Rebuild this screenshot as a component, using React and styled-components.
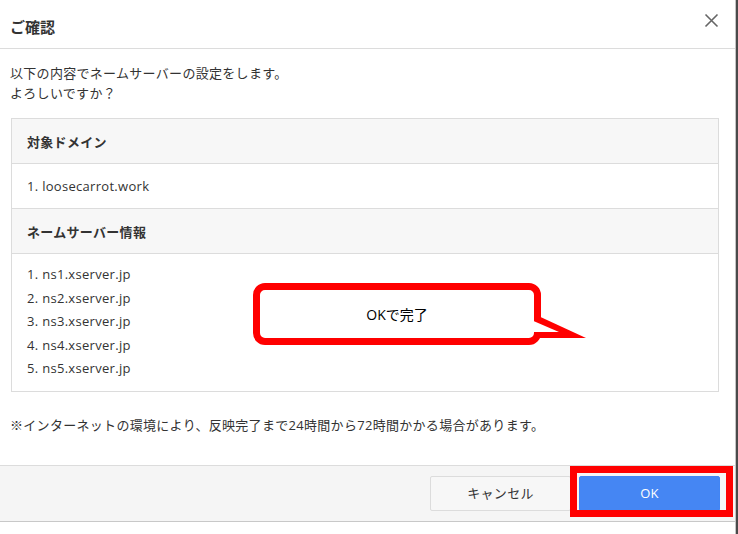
import styled, { createGlobalStyle } from 'styled-components';

const GlobalStyle = createGlobalStyle`
  html, body {
    margin: 0;
    padding: 0;
    background: #4a4a4a;
  }
  body {
    font-family: "Open Sans", "Noto Sans CJK JP", sans-serif;
    color: #333;
  }
`;

const nameservers = ['ns1.xserver.jp', 'ns2.xserver.jp', 'ns3.xserver.jp', 'ns4.xserver.jp', 'ns5.xserver.jp'];

export default function App() {
  return (
    <>
      <GlobalStyle />
      <Page>
        <Dialog>
          <Header>
            <Title>ご確認</Title>
            <CloseButton aria-label="close">
              <svg width={15} height={15} viewBox="0 0 15 15" aria-hidden="true">
                <path d="M1.5 1.5L13.5 13.5M13.5 1.5L1.5 13.5" stroke="#666" strokeWidth="1.6" fill="none" />
              </svg>
            </CloseButton>
          </Header>

          <Body>
            <Lead>
              以下の内容でネームサーバーの設定をします。
              <br />
              よろしいですか？
            </Lead>

            <InfoTable>
              <HeadRow>対象ドメイン</HeadRow>
              <ValueRow>1. loosecarrot.work</ValueRow>
              <HeadRow>ネームサーバー情報</HeadRow>
              <ListRow>
                {nameservers.map((ns, i) => (
                  <li key={ns}>
                    {i + 1}. {ns}
                  </li>
                ))}
              </ListRow>

              <Bubble>
                OKで完了
                <Tail width={60} height={32} viewBox="0 0 60 32" aria-hidden="true">
                  <polygon points="4,4 56,28 4,28" fill="#ff0000" />
                  <polygon points="0,9.5 29,22 0,22" fill="#fff" />
                </Tail>
              </Bubble>
            </InfoTable>

            <Note>※インターネットの環境により、反映完了まで24時間から72時間かかる場合があります。</Note>
          </Body>

          <Footer>
            <Button>キャンセル</Button>
            <Button primary>OK</Button>
            <Highlight />
          </Footer>
        </Dialog>
      </Page>
    </>
  );
}

const Page = styled.div`
  width: 738px;
  height: 534px;
  overflow: hidden;
`;

const Dialog = styled.div`
  width: 735px;
  height: 534px;
  background: #fff;
  border-right: 1px solid #c4c4c4;
  display: flex;
  flex-direction: column;
`;

const Header = styled.div`
  height: 49px;
  box-sizing: border-box;
  padding: 17px 16px 0 10px;
  border-bottom: 1px solid #dcdcdc;
  display: flex;
  justify-content: space-between;
  align-items: flex-start;
`;

const Title = styled.h2`
  margin: 0;
  font-size: 15px;
  line-height: 20px;
  font-weight: bold;
  color: #333;
`;

const CloseButton = styled.button`
  margin-top: -4px;
  padding: 0;
  border: 0;
  background: none;
  width: 15px;
  height: 15px;
  cursor: pointer;
`;

const Body = styled.div`
  flex: 1;
  padding: 14px 16px 0 11px;
  letter-spacing: 0.3px;
`;

const Lead = styled.p`
  margin: 0 0 0 -1px;
  font-size: 13px;
  line-height: 20px;
`;

const InfoTable = styled.div`
  position: relative;
  margin-top: 15px;
  border: 1px solid #dcdcdc;
  border-bottom-width: 0;
  font-size: 13px;
`;

const Row = styled.div`
  height: 45px;
  box-sizing: border-box;
  padding: 0 15px;
  display: flex;
  align-items: center;
  border-bottom: 1px solid #dcdcdc;
`;

const HeadRow = styled(Row)`
  background: #f7f7f7;
  font-weight: bold;
`;

const ValueRow = styled(Row)`
  background: #fff;
`;

const ListRow = styled.ol`
  list-style: none;
  margin: 0;
  padding: 9px 15px 10px;
  border-bottom: 1px solid #dcdcdc;
  line-height: 23.5px;
`;

const Bubble = styled.div`
  position: absolute;
  left: 241px;
  top: 164px;
  width: 288px;
  height: 62px;
  box-sizing: border-box;
  border: 7px solid #ff0000;
  border-radius: 12px;
  background: #fff;
  display: flex;
  align-items: center;
  justify-content: center;
  font-size: 14px;
  letter-spacing: 0;
  color: #000;
`;

const Tail = styled.svg`
  position: absolute;
  left: 270px;
  top: 20px;
  overflow: visible;
`;

const Note = styled.p`
  margin: 23px 0 0 -1px;
  font-size: 13px;
  line-height: 20px;
`;

const Footer = styled.div`
  position: relative;
  height: 57px;
  box-sizing: border-box;
  margin-bottom: 12px;
  padding: 10px 15px 0 0;
  background: #f5f5f5;
  border-top: 1px solid #dcdcdc;
  border-bottom: 1px solid #c8c8c8;
  display: flex;
  justify-content: flex-end;
  align-items: flex-start;
  gap: 8px;
`;

const Button = styled.button`
  width: 141px;
  height: 35px;
  padding: 0 0 2px;
  border-radius: 2px;
  font-family: inherit;
  font-size: 13px;
  letter-spacing: 0.3px;
  cursor: pointer;
  border: 1px solid ${p => (p.primary ? '#4285f4' : '#dcdcdc')};
  background: ${p => (p.primary ? '#4586f3' : '#f7f7f7')};
  color: ${p => (p.primary ? '#fff' : '#333')};
`;

const Highlight = styled.div`
  position: absolute;
  left: 570px;
  top: 0;
  width: 163px;
  height: 51px;
  box-sizing: border-box;
  border: 7px solid #ff0000;
  pointer-events: none;
`;
